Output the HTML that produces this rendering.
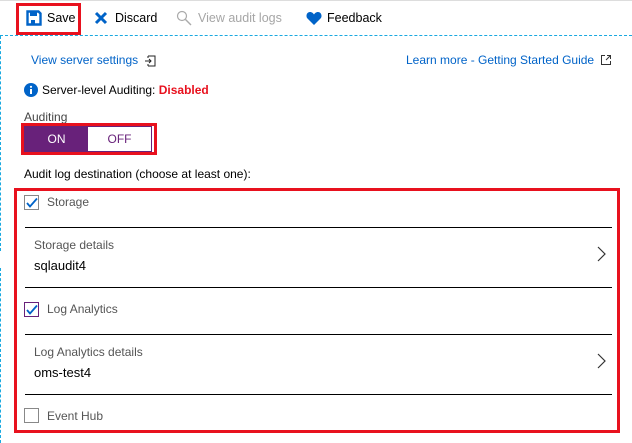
<!DOCTYPE html>
<html><head><meta charset="utf-8"><style>
*{margin:0;padding:0;box-sizing:border-box}
body{width:632px;height:443px;overflow:hidden;background:#fff;font-family:"Segoe UI","Liberation Sans",sans-serif;font-size:12px;color:#000;position:relative}
.a{position:absolute;white-space:nowrap}
.tb{font-size:12.5px}
.link{color:#0063c8}
.rb{position:absolute;border:3px solid #e8111e}
.hr{position:absolute;left:25px;width:587px;height:1px;background:#000}
.cb{position:absolute;left:24px;width:15px;height:15px;border:1px solid #888;background:#fff}
.sub{color:#555}
</style></head><body>
<div class="a" style="left:0;top:0;width:632px;height:1px;background:#ddd"></div>
<div class="a" style="left:0;top:35px;width:632px;border-top:1px dashed #1aa9e0"></div>
<div class="a" style="left:0;top:36px;height:215px;border-left:1px dashed #1aa9e0"></div>
<div class="a" style="left:0;top:268px;height:175px;border-left:1px dashed #1aa9e0"></div>

<div class="rb" style="left:16px;top:3px;width:65px;height:32px"></div>
<svg class="a" style="left:26px;top:10px" width="16" height="16" viewBox="0 0 16 16"><path d="M1.5 1.5h11l2 2v11h-13z" fill="none" stroke="#0063c8" stroke-width="2.4"/><rect x="4" y="2" width="7" height="4" fill="#0063c8"/><rect x="5" y="10" width="4" height="4" fill="#0063c8"/></svg>
<div class="a tb" style="left:47px;top:11px">Save</div>
<svg class="a" style="left:94px;top:11px" width="14" height="14"><path d="M2 2L12 12M12 2L2 12" stroke="#0063c8" stroke-width="3"/></svg>
<div class="a tb" style="left:115px;top:11px">Discard</div>
<svg class="a" style="left:176px;top:10px" width="16" height="16"><circle cx="6" cy="6" r="4.5" fill="none" stroke="#aaa" stroke-width="1.2"/><path d="M9.5 9.5L15 15" stroke="#aaa" stroke-width="1.4"/></svg>
<div class="a tb" style="left:198px;top:11px;color:#a6a6a6">View audit logs</div>
<svg class="a" style="left:306px;top:11px" width="16" height="14" viewBox="0 0 16 14"><path d="M8 14L1.5 7.5C-0.5 5.5 0.5 1 4 1C6 1 7.2 2.3 8 3.5C8.8 2.3 10 1 12 1C15.5 1 16.5 5.5 14.5 7.5Z" fill="#0063c8"/></svg>
<div class="a tb" style="left:327px;top:11px">Feedback</div>

<div class="a link" style="left:31px;top:53px">View server settings</div>
<svg class="a" style="left:144px;top:55px" width="12" height="12"><path d="M4 1h7v10H4M4 3V1M4 9v2M1 6h6M5 4l2 2-2 2" fill="none" stroke="#222" stroke-width="1"/></svg>
<div class="a link" style="left:406px;top:53px">Learn more - Getting Started Guide</div>
<svg class="a" style="left:601px;top:55px" width="10" height="10"><path d="M4 .5H.5v9h9V6M5 5l4.5-4.5M6 .5h3.5V4" fill="none" stroke="#333"/></svg>

<svg class="a" style="left:24px;top:83px" width="14" height="14"><circle cx="7" cy="7" r="7" fill="#0063c8"/><rect x="6" y="6" width="2" height="5" fill="#fff"/><circle cx="7" cy="3.8" r="1.1" fill="#fff"/></svg>
<div class="a" style="left:42px;top:83px">Server-level Auditing: <b style="color:#e8111e">Disabled</b></div>
<div class="a" style="left:24px;top:110px;color:#444">Auditing</div>
<div class="rb" style="left:21px;top:123px;width:136px;height:32px"></div>
<div class="a" style="left:24px;top:126px;width:128px;height:26px;border:1px solid #68217a"></div>
<div class="a" style="left:25px;top:127px;width:63px;height:24px;background:#68217a;color:#fff;text-align:center;line-height:24px">ON</div>
<div class="a" style="left:88px;top:127px;width:63px;height:24px;color:#68217a;text-align:center;line-height:24px">OFF</div>

<div class="a" style="left:24px;top:167px">Audit log destination (choose at least one):</div>
<div class="rb" style="left:14px;top:188px;width:606px;height:245px"></div>

<div class="cb" style="top:195px"></div>
<svg class="a" style="left:26px;top:197px" width="12" height="12"><path d="M1 6l3 3.5L11 1.5" fill="none" stroke="#0063c8" stroke-width="1.8"/></svg>
<div class="a sub" style="left:47px;top:195px">Storage</div>
<div class="hr" style="top:227px"></div>
<div class="a sub" style="left:34px;top:238px">Storage details</div>
<div class="a" style="left:34px;top:258px;font-size:13px">sqlaudit4</div>
<svg class="a" style="left:596px;top:246px" width="10" height="16"><path d="M2 1l7 7-7 7" fill="none" stroke="#333" stroke-width="1.2"/></svg>
<div class="hr" style="top:287px"></div>
<div class="cb" style="top:302px;border-color:#68217a"></div>
<svg class="a" style="left:26px;top:304px" width="12" height="12"><path d="M1 6l3 3.5L11 1.5" fill="none" stroke="#0063c8" stroke-width="1.8"/></svg>
<div class="a sub" style="left:47px;top:302px">Log Analytics</div>
<div class="hr" style="top:334px"></div>
<div class="a sub" style="left:34px;top:345px">Log Analytics details</div>
<div class="a" style="left:34px;top:365px;font-size:13px">oms-test4</div>
<svg class="a" style="left:596px;top:353px" width="10" height="16"><path d="M2 1l7 7-7 7" fill="none" stroke="#333" stroke-width="1.2"/></svg>
<div class="hr" style="top:394px"></div>
<div class="cb" style="top:408px"></div>
<div class="a sub" style="left:47px;top:409px">Event Hub</div>
</body></html>
